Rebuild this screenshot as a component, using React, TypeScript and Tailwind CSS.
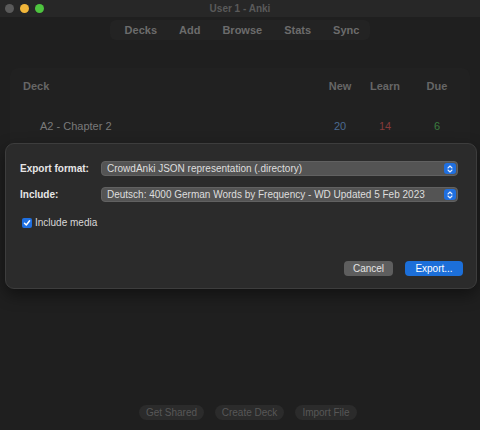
import React from "react";

const font = { fontFamily: '"Liberation Sans", Arial, sans-serif' };

const Stepper = () => (
  <span className="flex h-[11px] w-[12px] items-center justify-center rounded-[3px] bg-[#1f6fe0]">
    <svg width="6" height="8" viewBox="0 0 6 8" fill="none" stroke="#e8f0ff" strokeWidth="1.1" strokeLinecap="round" strokeLinejoin="round">
      <path d="M1 3 L3 1 L5 3" />
      <path d="M1 5 L3 7 L5 5" />
    </svg>
  </span>
);

const SelectBox = ({ value }: { value: string }) => (
  <div className="flex h-[15px] flex-1 items-center justify-between rounded-[4px] border border-[#616161] bg-[#545454] pl-[5px] pr-[1px]">
    <span className="text-[10px] leading-none text-[#dedede]">{value}</span>
    <Stepper />
  </div>
);

export default function App() {
  const tabs = ["Decks", "Add", "Browse", "Stats", "Sync"];
  return (
    <div className="relative flex h-[430px] w-[480px] flex-col overflow-hidden bg-[#1f1f1f]" style={font}>
      {/* title bar */}
      <div className="relative flex h-[17px] items-center bg-[#272727] pl-[5px]">
        <div className="flex gap-[6px]">
          <span className="h-[9px] w-[9px] rounded-full bg-[#5a5a5a]" />
          <span className="h-[9px] w-[9px] rounded-full bg-[#f1b63a]" />
          <span className="h-[9px] w-[9px] rounded-full bg-[#4ec43f]" />
        </div>
        <span className="absolute left-0 right-0 text-center text-[10px] font-bold text-[#5a5a5a]">User 1 - Anki</span>
      </div>

      {/* toolbar */}
      <div className="flex justify-center pt-[3px]">
        <div className="flex h-[20px] w-[260px] items-center justify-center gap-[22px] rounded-md bg-[#232323] pl-[4px] text-[11px] font-bold text-[#6c6c6c]">
          {tabs.map((t) => (
            <span key={t}>{t}</span>
          ))}
        </div>
      </div>

      {/* deck list */}
      <div className="mx-[10px] mt-[28px] h-[215px] rounded-t-lg bg-[#212121] pt-[10px]">
        <div className="grid grid-cols-[1fr_38px_52px_52px] items-center pl-[13px] pr-[7px] text-[11px] font-bold text-[#666666]">
          <span>Deck</span>
          <span className="text-center">New</span>
          <span className="text-center">Learn</span>
          <span className="text-center">Due</span>
        </div>
        <div className="mt-[23px] grid grid-cols-[1fr_38px_52px_52px] items-center pl-[30px] pr-[7px] text-[11px]">
          <span className="text-[#7a7a7a]">A2 - Chapter 2</span>
          <span className="text-center text-[#4b6a90]">20</span>
          <span className="text-center text-[#853a3a]">14</span>
          <span className="text-center text-[#3a7d3f]">6</span>
        </div>
      </div>

      <div className="flex-1" />

      {/* bottom buttons */}
      <div className="flex h-[25px] items-start justify-center gap-[11px] pl-[16px] text-[10px] text-[#575757]">
        <span className="flex h-[15px] w-[65px] shrink-0 items-center justify-center rounded-lg bg-[#2b2b2b]">Get Shared</span>
        <span className="flex h-[15px] w-[69px] shrink-0 items-center justify-center rounded-lg bg-[#2b2b2b]">Create Deck</span>
        <span className="flex h-[15px] w-[62px] shrink-0 items-center justify-center rounded-lg bg-[#2b2b2b]">Import File</span>
      </div>

      {/* export dialog */}
      <div className="absolute left-[5px] top-[143px] flex h-[146px] w-[472px] flex-col rounded-[9px] border border-[#3d3d3d] bg-[#2b2b2b] pl-[14px] pr-[18px] pt-[17px] shadow-[0_6px_16px_rgba(0,0,0,0.45)]">
        <div className="flex items-center">
          <span className="w-[81px] text-[10px] font-bold text-[#e6e6e6]">Export format:</span>
          <SelectBox value="CrowdAnki JSON representation (.directory)" />
        </div>
        <div className="mt-[11px] flex items-center">
          <span className="w-[81px] text-[10px] font-bold text-[#e6e6e6]">Include:</span>
          <SelectBox value="Deutsch: 4000 German Words by Frequency - WD Updated 5 Feb 2023" />
        </div>
        <div className="mt-[13px] flex items-center gap-[3px] pl-[2px]">
          <span className="flex h-[10px] w-[10px] items-center justify-center rounded-[2px] bg-[#1f6fe0]">
            <svg width="8" height="8" viewBox="0 0 8 8" fill="none" stroke="white" strokeWidth="1.5" strokeLinecap="round" strokeLinejoin="round">
              <path d="M1.5 4.2 L3.3 6 L6.6 1.8" />
            </svg>
          </span>
          <span className="text-[10px] text-[#d8d8d8]">Include media</span>
        </div>
        <div className="-mr-[5px] mt-[31px] flex justify-end gap-[12px]">
          <span className="flex h-[15px] w-[49px] items-center justify-center rounded-[4px] bg-[#5e5e5e] text-[10px] text-[#e4e4e4]">Cancel</span>
          <span className="flex h-[15px] w-[58px] items-center justify-center rounded-[4px] bg-[#1c6fd9] text-[10px] text-white">Export...</span>
        </div>
      </div>
    </div>
  );
}
